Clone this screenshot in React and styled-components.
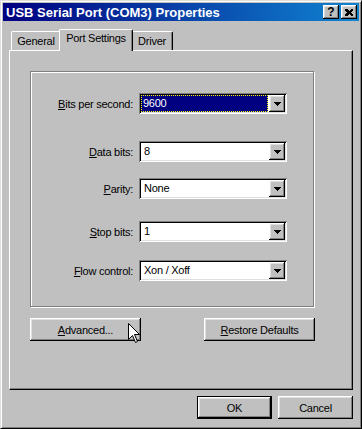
import React from 'react'
import styled, { createGlobalStyle } from 'styled-components'

const GlobalStyle = createGlobalStyle`
  body {
    margin: 0;
    background: #c0c0c0;
    font-family: "Liberation Sans", Arial, sans-serif;
    font-size: 11px;
    letter-spacing: -0.25px;
    color: #000;
  }
`

const raised = `
  box-shadow: inset -1px -1px #000, inset 1px 1px #fff,
    inset -2px -2px #808080, inset 2px 2px #dfdfdf;
`

const Window = styled.div`
  position: relative;
  box-sizing: border-box;
  width: 362px;
  height: 429px;
  padding: 2px;
  background: #c0c0c0;
  border: 1px solid;
  border-color: #dfdfdf #000 #000 #dfdfdf;
  box-shadow: inset 1px 1px #fff, inset -1px -1px #808080;
  display: flex;
  flex-direction: column;
`

const TitleBar = styled.div`
  height: 18px;
  display: flex;
  align-items: center;
  padding: 0 2px 0 3px;
  background: linear-gradient(to right, #000080, #1084d0);
  color: #fff;
  font-size: 13px;
  font-weight: bold;
  letter-spacing: 0;
`

const TitleText = styled.div`
  flex: 1;
  white-space: nowrap;
`

const TitleButton = styled.div`
  box-sizing: border-box;
  width: 16px;
  height: 14px;
  margin-left: ${p => p.$gap || 0}px;
  background: #c0c0c0;
  display: flex;
  align-items: center;
  justify-content: center;
  color: #000;
  font-size: 12px;
  font-weight: bold;
  ${raised}
`

const Body = styled.div`
  padding: 8px 6px 0 6px;
  display: flex;
  flex-direction: column;
`

const TabRow = styled.div`
  display: flex;
  align-items: flex-end;
  height: 21px;
  padding-left: 2px;
  position: relative;
  z-index: 1;
`

const Tab = styled.div`
  box-sizing: border-box;
  width: ${p => p.$w}px;
  height: ${p => (p.$active ? 22 : 19)}px;
  margin: 0 ${p => (p.$active ? -2 : 0)}px ${p => (p.$active ? -1 : 0)}px;
  padding-top: ${p => (p.$active ? 2 : 3)}px;
  text-align: center;
  background: #c0c0c0;
  border-top: 1px solid #fff;
  border-left: 1px solid #fff;
  border-right: 1px solid #000;
  border-radius: 2px 2px 0 0;
  box-shadow: inset -1px 0 #808080;
  position: relative;
  z-index: ${p => (p.$active ? 2 : 0)};
`

const Panel = styled.div`
  box-sizing: border-box;
  height: 340px;
  padding: 20px 0 0 20px;
  border-top: 1px solid #fff;
  border-left: 1px solid #fff;
  border-right: 1px solid #000;
  border-bottom: 1px solid #000;
  box-shadow: inset -1px -1px #808080;
`

const Group = styled.div`
  box-sizing: border-box;
  width: 284px;
  height: 236px;
  border: 1px solid #808080;
  box-shadow: inset 1px 1px #fff, 1px 1px #fff;
  display: flex;
  flex-direction: column;
`

const Row = styled.div`
  display: flex;
  align-items: center;
  height: 21px;
  margin-top: ${p => p.$top}px;
`

const Label = styled.div`
  width: 102px;
  margin-right: 6px;
  text-align: right;
  white-space: nowrap;
`

const Combo = styled.div`
  box-sizing: border-box;
  width: 148px;
  height: 21px;
  padding: 2px;
  background: #fff;
  display: flex;
  box-shadow: inset 1px 1px #808080, inset -1px -1px #fff,
    inset 2px 2px #000, inset -2px -2px #dfdfdf;
`

const ComboText = styled.div`
  box-sizing: border-box;
  flex: 1;
  margin-right: ${p => (p.$selected ? 1 : 0)}px;
  padding-left: ${p => (p.$selected ? 1 : 2)}px;
  line-height: 15px;
  background: ${p => (p.$selected ? '#000080' : 'transparent')};
  color: ${p => (p.$selected ? '#fff' : '#000')};
  border: 1px ${p => (p.$selected ? 'dotted #ffff00' : 'solid transparent')};
`

const DropButton = styled.div`
  box-sizing: border-box;
  width: 16px;
  height: 17px;
  background: #c0c0c0;
  display: flex;
  align-items: center;
  justify-content: center;
  ${raised}
`

const ButtonRow = styled.div`
  display: flex;
  justify-content: space-between;
  width: 285px;
  margin-top: 11px;
`

const Button = styled.div`
  box-sizing: border-box;
  width: ${p => p.$w}px;
  height: 23px;
  display: flex;
  align-items: center;
  justify-content: center;
  background: #c0c0c0;
  border: ${p => (p.$default ? '1px solid #000' : 'none')};
  ${raised}
`

const Footer = styled.div`
  display: flex;
  justify-content: flex-end;
  gap: 6px;
  margin-top: 6px;
`

const Cursor = styled.svg`
  position: absolute;
  left: 127px;
  top: 322px;
`

const Arrow = () => (
  <svg width="7" height="4" shapeRendering="crispEdges">
    <rect x="0" y="0" width="7" height="1" fill="#000" />
    <rect x="1" y="1" width="5" height="1" fill="#000" />
    <rect x="2" y="2" width="3" height="1" fill="#000" />
    <rect x="3" y="3" width="1" height="1" fill="#000" />
  </svg>
)

const Close = () => (
  <svg width="8" height="7" shapeRendering="crispEdges">
    <path d="M0 0h2l2 2 2-2h2v1l-2 2.5 2 2.5v1h-2l-2-2-2 2h-2v-1l2-2.5-2-2.5z" fill="#000" />
  </svg>
)

const fields = [
  { key: 'B', rest: 'its per second:', value: '9600', top: 21, selected: true },
  { key: 'D', rest: 'ata bits:', value: '8', top: 27 },
  { key: 'P', rest: 'arity:', value: 'None', top: 16 },
  { key: 'S', rest: 'top bits:', value: '1', top: 22 },
  { key: 'F', rest: 'low control:', value: 'Xon / Xoff', top: 18 },
]

export default function App() {
  return (
    <>
      <GlobalStyle />
      <Window>
        <TitleBar>
          <TitleText>USB Serial Port (COM3) Properties</TitleText>
          <TitleButton>?</TitleButton>
          <TitleButton $gap={2}><Close /></TitleButton>
        </TitleBar>
        <Body>
          <TabRow>
            <Tab $w={50}>General</Tab>
            <Tab $w={74} $active>Port Settings</Tab>
            <Tab $w={42}>Driver</Tab>
          </TabRow>
          <Panel>
            <Group>
              {fields.map(f => (
                <Row key={f.key} $top={f.top}>
                  <Label><u>{f.key}</u>{f.rest}</Label>
                  <Combo>
                    <ComboText $selected={f.selected}>{f.value}</ComboText>
                    <DropButton><Arrow /></DropButton>
                  </Combo>
                </Row>
              ))}
            </Group>
            <ButtonRow>
              <Button $w={111}><span><u>A</u>dvanced...</span></Button>
              <Button $w={111}><span><u>R</u>estore Defaults</span></Button>
            </ButtonRow>
          </Panel>
          <Footer>
            <Button $w={75} $default>OK</Button>
            <Button $w={75}>Cancel</Button>
          </Footer>
        </Body>
        <Cursor width="13" height="21" viewBox="0 0 13 21">
          <path d="M0.5 0.5V16.5L4.5 12.5L7.5 19.5L9.5 18.5L6.5 11.5H11.5Z" fill="#fff" stroke="#000" strokeLinejoin="miter" />
        </Cursor>
      </Window>
    </>
  )
}
